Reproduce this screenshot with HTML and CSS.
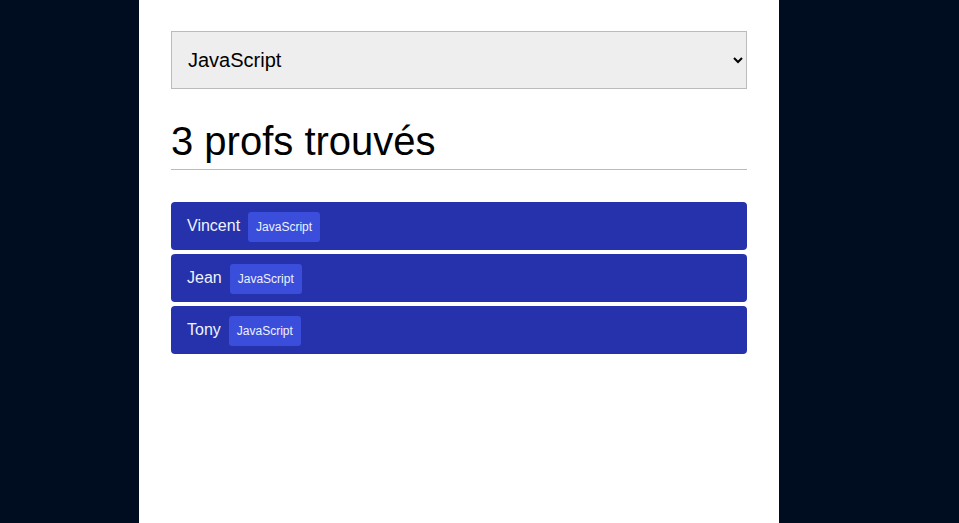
FILE: index.html
```html
<!DOCTYPE html>
<html lang="fr">
<head>
<meta charset="utf-8">
<title>Profs</title>
<link rel="stylesheet" href="styles.css">
</head>
<body>
<main class="page">
  <div class="select-wrap">
    <select class="lang-select">
      <option>JavaScript</option>
    </select>
  </div>
  <h1 class="title">3 profs trouvés</h1>
  <ul class="list">
    <li class="card"><span class="name">Vincent</span><span class="badge">JavaScript</span></li>
    <li class="card"><span class="name">Jean</span><span class="badge">JavaScript</span></li>
    <li class="card"><span class="name">Tony</span><span class="badge">JavaScript</span></li>
  </ul>
</main>
</body>
</html>
```
FILE: styles.css
```css
html, body {
  margin: 0;
  height: 100%;
}
body {
  background: #000c1f;
  font-family: "Liberation Sans", Arial, sans-serif;
}
.page {
  box-sizing: border-box;
  width: 640px;
  min-height: 100%;
  margin-left: 139px;
  background: #fff;
  padding: 31px 32px;
}
.lang-select {
  display: block;
  width: 100%;
  height: 58px;
  box-sizing: border-box;
  background: #eeeeee;
  border: 1px solid #bbbbbb;
  border-radius: 0;
  padding: 0 12px;
  font-family: "Liberation Sans", Arial, sans-serif;
  font-size: 20px;
  color: #000;
}
.title {
  margin: 28px 0 0;
  font-size: 40px;
  font-weight: normal;
  line-height: 48px;
  padding-bottom: 4px;
  border-bottom: 1px solid #bbbbbb;
  color: #000;
}
.list {
  list-style: none;
  margin: 32px 0 0;
  padding: 0;
  display: flex;
  flex-direction: column;
  gap: 4px;
}
.card {
  display: flex;
  align-items: center;
  height: 48px;
  box-sizing: border-box;
  padding: 0 16px;
  background: #2532ab;
  border-radius: 4px;
  color: #eef2ff;
  font-size: 16px;
}
.badge {
  margin-left: 8px;
  margin-top: 2px;
  background: #3a4ddb;
  border-radius: 3px;
  font-size: 12px;
  line-height: 30px;
  padding: 0 8px;
  color: #eef2ff;
}
```
